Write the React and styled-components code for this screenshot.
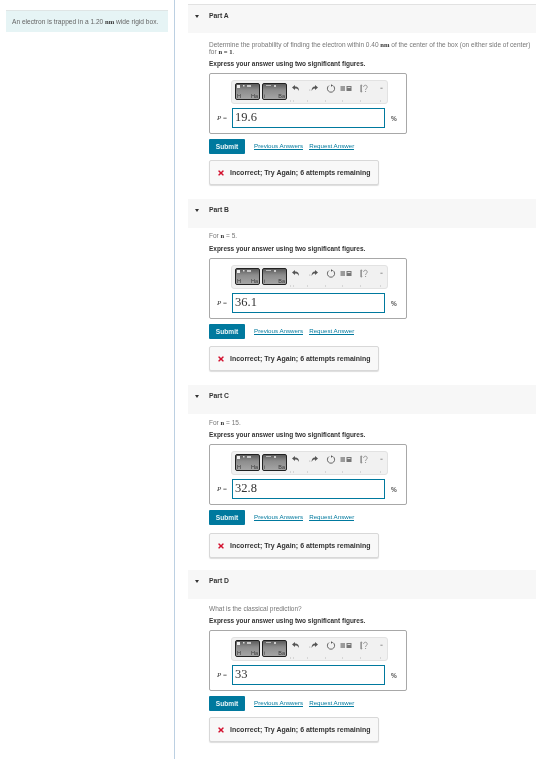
import React from "react";
import styled, { createGlobalStyle } from "styled-components";
import { FaTimes } from "react-icons/fa";

const GlobalStyle = createGlobalStyle`
  html, body { margin: 0; padding: 0; background: #fff; }
  body { font-family: "Liberation Sans", Arial, sans-serif; color: #333; }
`;

const Page = styled.div`
  width: 536px;
  height: 759px;
  display: flex;
  overflow: hidden;
  filter: blur(0.3px);
`;

const Sidebar = styled.aside`
  width: 175px;
  flex: none;
  box-sizing: border-box;
  padding: 10px 6px 0 6px;
  border-right: 1px solid #bcd0e2;
`;

const Intro = styled.div`
  height: 22px;
  box-sizing: border-box;
  padding-left: 6px;
  display: flex;
  align-items: center;
  background: #e6f4f5;
  border-top: 1px solid #dfe5e5;
  font-size: 6.6px;
  color: #666;
  white-space: nowrap;
`;

const Bold = styled.b`
  font-family: "Liberation Serif", serif;
  color: #333;
  font-size: 6.6px;
`;

const Main = styled.main`
  flex: 1;
  padding: 4px 0 0 13px;
  display: flex;
  flex-direction: column;
`;

const PartBlock = styled.section`
  height: ${(p) => p.$height}px;
`;

const PartHead = styled.div`
  height: 29px;
  box-sizing: border-box;
  display: flex;
  align-items: flex-start;
  padding: 7px 0 0 7px;
  background: #f7f7f7;
  border-top: ${(p) => (p.$first ? "1px solid #e2e2e2" : "0")};
  font-size: 6.8px;
  font-weight: 700;
  color: #333;
`;

const Caret = styled.span`
  width: 0;
  height: 0;
  margin: 3px 10px 0 0;
  border-left: 2px solid transparent;
  border-right: 2px solid transparent;
  border-top: 3px solid #333;
`;

const PartBody = styled.div`
  padding: ${(p) => p.$top}px 0 0 21px;
`;

const Prompt = styled.p`
  margin: 0;
  font-size: 6.52px;
  line-height: 7px;
  color: #777;
  white-space: nowrap;
`;

const Instruction = styled.p`
  margin: ${(p) => p.$gap}px 0 0;
  font-size: 6.47px;
  line-height: 8px;
  font-weight: 700;
  color: #333;
`;

const AnswerBox = styled.div`
  width: 198px;
  height: 61px;
  margin-top: 5px;
  box-sizing: border-box;
  border: 1px solid #a8a8a8;
  border-radius: 2px;
  padding: 6px 0 0 7px;
  background: #fff;
`;

const Toolbar = styled.div`
  width: 157px;
  height: 24px;
  margin-left: 14px;
  box-sizing: border-box;
  padding: 2px 0 0 3px;
  display: flex;
  position: relative;
  background: #f1f1f1;
  border: 1px solid #e2e2e2;
  border-radius: 3px;
`;

const TemplateButton = styled.div`
  width: 25px;
  height: 17px;
  margin-right: 2px;
  box-sizing: border-box;
  border: 1px solid #222;
  border-radius: 2px;
  background: linear-gradient(#5a5a5a 0, #8c8c8c 40%, #a5a5a5 100%);
  display: flex;
  align-items: flex-end;
  justify-content: space-between;
  position: relative;
  padding: 0 1px;
  font-size: 5.5px;
  line-height: 6px;
  color: #3a3a3a;
`;

const ButtonMarks = styled.svg`
  position: absolute;
  top: 1px;
  left: 1px;
  width: 20px;
  height: 4px;
`;

const ToolIcons = styled.div`
  display: flex;
  align-items: flex-start;
  margin-left: 2px;
`;

const ToolIcon = styled.svg`
  width: ${(p) => p.$w}px;
  height: 9px;
  margin: 1px ${(p) => p.$gap}px 0 0;
  flex: none;
`;

const ToolDots = styled.svg`
  position: absolute;
  left: 58px;
  bottom: 0;
  width: 96px;
  height: 3px;
`;

const InputRow = styled.div`
  display: flex;
  align-items: center;
  margin-top: 4px;
`;

const Variable = styled.span`
  width: 15px;
  flex: none;
  font-family: "Liberation Serif", serif;
  font-size: 7px;
  color: #333;
  white-space: nowrap;
`;

const Field = styled.div`
  width: 153px;
  height: 20px;
  box-sizing: border-box;
  border: 1px solid #00799e;
  padding-left: 2px;
  font-family: "Liberation Serif", serif;
  font-size: 12.5px;
  line-height: 16px;
  color: #333;
`;

const Unit = styled.span`
  margin-left: 6px;
  font-size: 6.5px;
  font-weight: 700;
  color: #555;
`;

const Actions = styled.div`
  display: flex;
  align-items: center;
  margin-top: 5px;
`;

const Submit = styled.div`
  width: 36px;
  height: 15px;
  display: flex;
  align-items: center;
  justify-content: center;
  border-radius: 1px;
  background: #00799e;
  color: #e9f4f7;
  font-size: 6.6px;
  font-weight: 700;
`;

const Link = styled.a`
  margin-left: ${(p) => p.$gap}px;
  font-size: 6.2px;
  line-height: 6px;
  color: #00799e;
  border-bottom: 1px solid #00799e;
`;

const Feedback = styled.div`
  width: 170px;
  height: 25px;
  margin-top: ${(p) => p.$gap}px;
  box-sizing: border-box;
  display: flex;
  align-items: center;
  padding-left: 7px;
  background: #f8f8f8;
  border: 1px solid #d8d8d8;
  border-radius: 2px;
  box-shadow: 0 1px 1px #ddd;
  font-size: 7px;
  font-weight: 700;
  color: #333;
  white-space: nowrap;
`;

const Cross = styled(FaTimes)`
  width: 8px;
  height: 8px;
  margin-right: 5px;
  color: #d3112f;
`;

const parts = [
  {
    name: "Part A",
    value: "19.6",
    top: 8,
    gap: 5,
    feedbackGap: 6,
    height: 195,
    prompt: (
      <>
        Determine the probability of finding the electron within 0.40 <Bold>nm</Bold> of the center of the box (on either side of center)
        <br />
        for <Bold>n = 1</Bold>.
      </>
    ),
  },
  { name: "Part B", value: "36.1", top: 4, gap: 6, feedbackGap: 7, height: 186, prompt: <>For <Bold>n</Bold> = 5.</> },
  { name: "Part C", value: "32.8", top: 5, gap: 5, feedbackGap: 8, height: 185, prompt: <>For <Bold>n</Bold> = 15.</> },
  { name: "Part D", value: "33", top: 6, gap: 5, feedbackGap: 6, height: 189, prompt: <>What is the classical prediction?</> },
];

function EditorTools() {
  return (
    <ToolIcons>
      <ToolIcon $w={9} $gap={9} viewBox="0 0 9 9">
        <path d="M1 3.5 4 1v1.6c3 0 4 1.8 4 4.4C7 5.2 6 4.6 4 4.6V6z" fill="#555" />
      </ToolIcon>
      <ToolIcon $w={10} $gap={7} viewBox="0 0 10 9">
        <path d="M9 3.5 6 1v1.6C3.6 2.6 2.6 4.4 2.6 7 3.6 5.2 4.4 4.6 6 4.6V6z" fill="#555" />
        <circle cx="0.8" cy="6" r="0.5" fill="#999" />
      </ToolIcon>
      <ToolIcon $w={10} $gap={4} viewBox="0 0 10 9">
        <path d="M3 1.6A3.6 3.6 0 1 0 7 1.6" fill="none" stroke="#555" strokeWidth="0.9" />
        <path d="M5 0.2v2.6L7 1.5z" fill="#555" />
      </ToolIcon>
      <ToolIcon $w={12} $gap={8} viewBox="0 0 12 9">
        <rect x="0.5" y="2" width="4.5" height="5" fill="#9a9a9a" />
        <rect x="6.5" y="2" width="5" height="5" fill="#777" />
        <rect x="7.5" y="3" width="3" height="1" fill="#ddd" />
      </ToolIcon>
      <ToolIcon $w={8} $gap={12} viewBox="0 0 8 9">
        <path d="M0.8 1h1v.8h-.4v5.4h.4V8h-1zM3.6 3c0-2.4 3.6-2.4 3.6 0 0 1.5-1.6 1.4-1.6 3" fill="none" stroke="#777" strokeWidth="0.7" />
        <circle cx="5.6" cy="7.6" r="0.5" fill="#777" />
      </ToolIcon>
      <ToolIcon $w={3} $gap={0} viewBox="0 0 3 9">
        <rect x="0.4" y="3.6" width="2.2" height="1.4" fill="#aaa" />
      </ToolIcon>
    </ToolIcons>
  );
}

function Part({ part, first }) {
  return (
    <PartBlock $height={part.height}>
      <PartHead $first={first}>
        <Caret />
        {part.name}
      </PartHead>
      <PartBody $top={part.top}>
        <Prompt>{part.prompt}</Prompt>
        <Instruction $gap={part.gap}>Express your answer using two significant figures.</Instruction>
        <AnswerBox>
          <Toolbar>
            <TemplateButton>
              <ButtonMarks viewBox="0 0 20 4">
                <rect x="0" y="0" width="3" height="3" fill="#eee" />
                <rect x="6" y="0" width="1.5" height="1.5" fill="#ddd" />
                <rect x="10" y="0" width="4" height="2" fill="#c8c8c8" />
              </ButtonMarks>
              <span>H</span>
              <span>Ha</span>
            </TemplateButton>
            <TemplateButton>
              <ButtonMarks viewBox="0 0 20 4">
                <rect x="2" y="0" width="5" height="1" fill="#bbb" />
                <rect x="10" y="0" width="2" height="2" fill="#ccc" />
              </ButtonMarks>
              <span>i</span>
              <span>Ba</span>
            </TemplateButton>
            <EditorTools />
            <ToolDots viewBox="0 0 96 3">
              {[0, 3, 17, 35, 52, 70, 90].map((x) => (
                <rect key={x} x={x} y="0.5" width="1" height="1" fill="#bbb" />
              ))}
            </ToolDots>
          </Toolbar>
          <InputRow>
            <Variable><i>P</i> =</Variable>
            <Field>{part.value}</Field>
            <Unit>%</Unit>
          </InputRow>
        </AnswerBox>
        <Actions>
          <Submit>Submit</Submit>
          <Link $gap={9}>Previous Answers</Link>
          <Link $gap={6}>Request Answer</Link>
        </Actions>
        <Feedback $gap={part.feedbackGap}>
          <Cross />
          Incorrect; Try Again; 6 attempts remaining
        </Feedback>
      </PartBody>
    </PartBlock>
  );
}

export default function App() {
  return (
    <Page>
      <GlobalStyle />
      <Sidebar>
        <Intro>
          <span>An electron is trapped in a 1.20 <Bold>nm</Bold> wide rigid box.</span>
        </Intro>
      </Sidebar>
      <Main>
        {parts.map((part, i) => (
          <Part key={part.name} part={part} first={i === 0} />
        ))}
      </Main>
    </Page>
  );
}
